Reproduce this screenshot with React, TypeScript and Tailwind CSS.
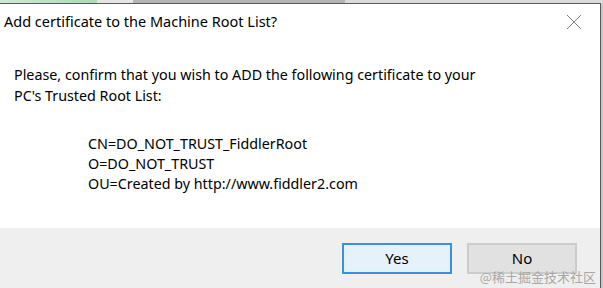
export default function App() {
  const font = { fontFamily: '"Noto Sans", "Open Sans", sans-serif' };
  return (
    <div className="relative w-[603px] h-[288px] overflow-hidden bg-white" style={font}>
      {/* background strip */}
      <div className="flex h-[3px] w-full">
        <div className="w-[97px] bg-gradient-to-r from-[#cfe9d4] to-[#a9dbb4]" />
        <div className="w-[36px] bg-[#e6e6e6]" />
        <div className="w-[212px] bg-[#b4b4b4]" />
        <div className="flex-1 bg-[#dcdcdc]" />
      </div>
      <div className="flex h-[285px]">
        <div className="flex w-[601px] flex-col border-t border-r border-[#5a5a5a] bg-white">
          <div className="flex h-[36px] items-center justify-between pl-[4px] pr-[18px]">
            <span className="text-[14.5px] text-black">Add certificate to the Machine Root List?</span>
            <svg width="16" height="16" viewBox="0 0 16 16" className="text-[#808080]">
              <path d="M1 1L15 15M15 1L1 15" stroke="currentColor" strokeWidth="1" />
            </svg>
          </div>
          <div className="flex-1 pl-[14px] pt-[24px] text-[14.3px] leading-[21px] text-black">
            <div>Please, confirm that you wish to ADD the following certificate to your</div>
            <div>PC's Trusted Root List:</div>
            <div className="mt-[28px] pl-[74px] leading-[20px]">
              <div>CN=DO_NOT_TRUST_FiddlerRoot</div>
              <div>O=DO_NOT_TRUST</div>
              <div>OU=Created by http://www.fiddler2.com</div>
            </div>
          </div>
          <div className="relative flex h-[60px] items-start justify-end gap-[15px] bg-[#efefef] pr-[23px] pt-[15px]">
            <button className="h-[31px] w-[110px] border-2 border-[#3c8ee0] bg-[#e5f1fb] text-[15px] text-black">Yes</button>
            <button className="h-[31px] w-[110px] border-2 border-[#cccccc] bg-[#e1e1e1] text-[15px] text-black">No</button>
            <span className="absolute right-[4px] bottom-[3px] text-[13px] leading-[16px] text-[#a8a8a8]" style={{ fontFamily: '"Noto Sans CJK SC", sans-serif' }}>@稀土掘金技术社区</span>
          </div>
        </div>
        <div className="flex-1 bg-[#c8c8c8]" />
      </div>
    </div>
  );
}
